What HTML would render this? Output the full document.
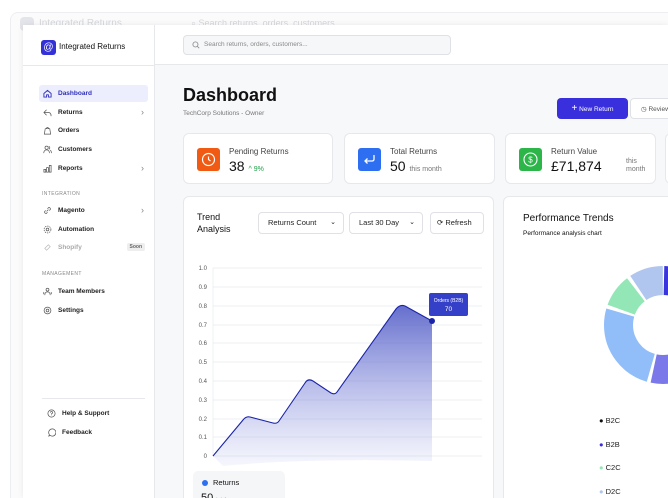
<!DOCTYPE html>
<html><head><meta charset="utf-8">
<style>
*{box-sizing:border-box;margin:0;padding:0}
html,body{width:668px;height:498px;overflow:hidden}
body{background:#fff;font-family:"Liberation Sans",sans-serif;position:relative;color:#111}
.ghost{position:absolute;left:10px;top:12px;width:658px;height:486px;border:1px solid #eceef1;border-right:none;border-bottom:none;border-radius:8px 0 0 0;background:#fbfbfc;overflow:hidden}
.ghost .t{position:absolute;left:28px;top:5px;font-size:10px;color:#d5d7dc}
.ghost .s{position:absolute;left:180px;top:5px;font-size:9px;color:#d5d7dc}
.ghost .lg{position:absolute;left:9px;top:4px;width:14px;height:14px;border-radius:4px;background:#e4e5ea}
.app{position:absolute;left:23px;top:25px;width:645px;height:473px;background:#f7f8fa;box-shadow:0 0 6px rgba(0,0,0,.08);overflow:hidden}
.side{position:absolute;left:0;top:0;width:132px;height:500px;background:#fff;border-right:1px solid #e6e8ec}
.hdr{position:absolute;left:132px;top:0;right:0;height:40px;background:#fff;border-bottom:1px solid #e6e8ec}
.logo{position:absolute;left:18px;top:15px;width:15px;height:15px;border-radius:3px;background:#3431d6;color:#fff;font-size:10px;text-align:center;line-height:15px}
.brand{position:absolute;left:36px;top:17px;font-size:8px;color:#111}
.sline{position:absolute;left:0;top:40px;width:132px;border-top:1px solid #e6e8ec}
.nav{position:absolute;left:16px;width:109px;height:17px;font-size:6.5px;font-weight:bold;color:#222;line-height:17px;padding-left:19px;border-radius:3px}
.nav svg{position:absolute;left:4px;top:4px}
.nav.act{background:#eceefe;color:#2f2fb8}
.chev{position:absolute;right:4px;top:0;color:#888;font-weight:normal;font-size:9px}
.sec{position:absolute;left:19px;font-size:5px;color:#888;letter-spacing:.4px}
.search{position:absolute;left:160px;top:10px;width:268px;height:20px;border:1px solid #dfe1e6;border-radius:4px;background:#f6f7f9;font-size:6.5px;color:#888;line-height:18px;padding-left:20px}
.search svg{position:absolute;left:8px;top:5px}
h1{position:absolute;left:160px;top:60px;font-size:18px;font-weight:bold;color:#111}
.sub{position:absolute;left:160px;top:85px;font-size:6.5px;color:#777}
.btn{position:absolute;top:73px;height:21px;border-radius:4px;font-size:6.5px;line-height:21px;text-align:center}
.card{position:absolute;background:#fff;border:1px solid #e6e8ec;border-radius:6px}
.ic{position:absolute;left:13px;top:14px;width:23px;height:23px;border-radius:3px}
.cl{position:absolute;left:45px;top:13px;font-size:8px;color:#444}
.cv{position:absolute;left:45px;top:24px;font-size:14px;color:#111}
.sel{position:absolute;top:15px;height:22px;border:1px solid #dfe1e6;border-radius:4px;font-size:7.5px;line-height:20px;padding-left:9px;color:#222;background:#fff}
</style></head><body>
<div class="ghost"><div class="lg"></div><div class="t">Integrated Returns</div><div class="s">⌕ Search returns, orders, customers...</div></div>
<div class="app">
 <div class="side">
  <div class="logo">@</div><div class="brand">Integrated Returns</div>
  <div class="sline"></div>
  <div class="nav act" style="top:60px"><svg width="9" height="9" viewBox="0 0 10 10" fill="none" stroke="#2f2fb8" stroke-width="1"><path d="M1 5L5 1.5 9 5V9H6V6.5H4V9H1Z"/></svg>Dashboard</div>
  <div class="nav" style="top:79px"><svg width="9" height="9" viewBox="0 0 10 10" fill="none" stroke="#555" stroke-width="0.8"><path d="M4 2L1 5 4 8M1 5H6Q9 5 9 9"/></svg>Returns<span class="chev">›</span></div>
  <div class="nav" style="top:97px"><svg width="9" height="9" viewBox="0 0 10 10" fill="none" stroke="#555" stroke-width="0.8"><path d="M1.5 9L2.5 3H7.5L8.5 9ZM3.5 3Q5 0 6.5 3"/></svg>Orders</div>
  <div class="nav" style="top:116px"><svg width="9" height="9" viewBox="0 0 10 10" fill="none" stroke="#555" stroke-width="0.8"><circle cx="4" cy="3" r="1.8"/><path d="M0.8 9Q1 5.5 4 5.5T7.2 9M6.5 1.5A1.8 1.8 0 0 1 6.5 4.8M8 5.8Q9.3 6.5 9.3 9"/></svg>Customers</div>
  <div class="nav" style="top:135px"><svg width="9" height="9" viewBox="0 0 10 10" fill="none" stroke="#555" stroke-width="0.8"><path d="M1 9V6H3V9ZM4 9V4H6V9ZM7 9V1.5H9V9Z"/></svg>Reports<span class="chev">›</span></div>
  <div class="sec" style="top:166px">INTEGRATION</div>
  <div class="nav" style="top:177px"><svg width="9" height="9" viewBox="0 0 10 10" fill="none" stroke="#555" stroke-width="0.8"><path d="M4 6L6 4M3 5L1.8 6.2A1.6 1.6 0 0 0 3.8 8.2L5 7M5 3L6.2 1.8A1.6 1.6 0 0 1 8.2 3.8L7 5"/></svg>Magento<span class="chev">›</span></div>
  <div class="nav" style="top:196px"><svg width="9" height="9" viewBox="0 0 10 10" fill="none" stroke="#555" stroke-width="0.8"><circle cx="5" cy="5" r="1.5"/><circle cx="5" cy="5" r="3.8" stroke-dasharray="1.5 1"/></svg>Automation</div>
  <div class="nav" style="top:214px;color:#aaa"><svg width="9" height="9" viewBox="0 0 10 10" fill="none" stroke="#bbb" stroke-width="0.8"><path d="M2 6L6 2 8 4 4 8Z"/></svg>Shopify<span style="position:absolute;right:3px;top:4px;background:#eee;color:#666;font-size:5px;line-height:8px;padding:0 3px;border-radius:2px">Soon</span></div>
  <div class="sec" style="top:246px">MANAGEMENT</div>
  <div class="nav" style="top:258px"><svg width="9" height="9" viewBox="0 0 10 10" fill="none" stroke="#555" stroke-width="0.8"><circle cx="5" cy="3" r="1.6"/><path d="M2 9Q2 5.5 5 5.5T8 9M1 5.5Q0.5 7 1 8M9 5.5Q9.5 7 9 8"/></svg>Team Members</div>
  <div class="nav" style="top:277px"><svg width="9" height="9" viewBox="0 0 10 10" fill="none" stroke="#555" stroke-width="0.8"><circle cx="5" cy="5" r="1.5"/><circle cx="5" cy="5" r="3.8"/></svg>Settings</div>
  <div style="position:absolute;left:19px;top:373px;width:103px;border-top:1px solid #e6e8ec"></div>
  <div class="nav" style="top:380px;left:20px"><svg width="9" height="9" viewBox="0 0 10 10" fill="none" stroke="#555" stroke-width="0.8"><circle cx="5" cy="5" r="4"/><path d="M3.8 4Q3.8 2.8 5 2.8T6.2 4Q6.2 5 5 5.3V6.2M5 7.2V7.5"/></svg>Help &amp; Support</div>
  <div class="nav" style="top:399px;left:20px"><svg width="9" height="9" viewBox="0 0 10 10" fill="none" stroke="#555" stroke-width="0.8"><path d="M2 9L2.6 7.3A4 4 0 1 1 3.6 8.3Z"/></svg>Feedback</div>
 </div>
 <div class="hdr"></div>
 <div class="search"><svg width="8" height="8" viewBox="0 0 10 10" fill="none" stroke="#888" stroke-width="1"><circle cx="4.3" cy="4.3" r="3.2"/><path d="M6.7 6.7L9 9"/></svg>Search returns, orders, customers...</div>
 <h1>Dashboard</h1>
 <div class="sub">TechCorp Solutions - Owner</div>
 <div class="btn" style="left:534px;width:71px;background:#3a2fdc;color:#fff"><b style="font-size:10px;font-weight:normal">+</b> New Return</div>
 <div class="btn" style="left:607px;width:70px;background:#fff;border:1px solid #dfe1e6;color:#555;text-align:left;padding-left:10px">◷ Review</div>

 <div class="card" style="left:160px;top:108px;width:150px;height:51px"><div class="ic" style="background:#f05a12"><svg width="23" height="23" viewBox="0 0 23 23" fill="none" stroke="#fff" stroke-width="1.2"><circle cx="11.5" cy="11.5" r="6"/><path d="M11.5 8.5V11.5L13.5 13"/></svg></div><div class="cl">Pending Returns</div><div class="cv">38 <span style="font-size:7px;color:#22a04a">^ 9%</span></div></div>
 <div class="card" style="left:321px;top:108px;width:151px;height:51px"><div class="ic" style="background:#2d6ff0"><svg width="23" height="23" viewBox="0 0 23 23" fill="none" stroke="#fff" stroke-width="1.3"><path d="M16 7V11Q16 13 14 13H7M9.5 10.5L7 13 9.5 15.5"/></svg></div><div class="cl">Total Returns</div><div class="cv">50 <span style="font-size:7px;color:#777">this month</span></div></div>
 <div class="card" style="left:482px;top:108px;width:151px;height:51px"><div class="ic" style="background:#2cb64a"><svg width="23" height="23" viewBox="0 0 23 23" fill="none" stroke="#fff" stroke-width="1.1"><circle cx="11.5" cy="11.5" r="6.5"/><text x="11.5" y="14.5" font-size="8" fill="#fff" stroke="none" text-anchor="middle" font-family="Liberation Sans">$</text></svg></div><div class="cl">Return Value</div><div class="cv">£71,874</div><div style="position:absolute;left:120px;top:24px;font-size:7px;color:#777;line-height:8px">this<br>month</div></div>
 <div class="card" style="left:642px;top:108px;width:60px;height:51px"></div>

 <div class="card" style="left:160px;top:171px;width:311px;height:340px">
  <div style="position:absolute;left:13px;top:14px;font-size:9px;color:#111;line-height:12px">Trend<br>Analysis</div>
  <div class="sel" style="left:74px;width:86px">Returns Count <span style="position:absolute;right:7px;font-size:7px">⌄</span></div>
  <div class="sel" style="left:165px;width:74px">Last 30 Day <span style="position:absolute;right:7px;font-size:7px">⌄</span></div>
  <div class="sel" style="left:246px;width:54px;padding-left:6px">⟳ Refresh</div>
 </div>
 <svg style="position:absolute;left:160px;top:171px" width="311" height="300">
  <defs><linearGradient id="g" x1="0" y1="0" x2="0" y2="1"><stop offset="0" stop-color="#4a55c4" stop-opacity=".85"/><stop offset="1" stop-color="#8890e0" stop-opacity=".08"/></linearGradient></defs>
  <g stroke="#e9eaee" stroke-width="0.7">
   <line x1="30" y1="72" x2="299" y2="72"/><line x1="30" y1="91" x2="299" y2="91"/><line x1="30" y1="110" x2="299" y2="110"/><line x1="30" y1="129" x2="299" y2="129"/><line x1="30" y1="147" x2="299" y2="147"/><line x1="30" y1="166" x2="299" y2="166"/><line x1="30" y1="185" x2="299" y2="185"/><line x1="30" y1="204" x2="299" y2="204"/><line x1="30" y1="223" x2="299" y2="223"/><line x1="30" y1="241" x2="299" y2="241"/><line x1="30" y1="260" x2="299" y2="260"/><line x1="30" y1="72" x2="30" y2="260"/>
  </g>
  <g font-size="6" fill="#555" font-family="Liberation Sans" text-anchor="end">
   <text x="24" y="74">1.0</text><text x="24" y="93">0.9</text><text x="24" y="112">0.8</text><text x="24" y="131">0.7</text><text x="24" y="149">0.6</text><text x="24" y="168">0.5</text><text x="24" y="187">0.4</text><text x="24" y="206">0.3</text><text x="24" y="225">0.2</text><text x="24" y="243">0.1</text><text x="24" y="262">0</text>
  </g>
  <path d="M30 260L60 224Q63 220 67 221L90 227Q94 228 96 225L122 187Q125 182 130 185L148 197Q152 199 154 196L213 113Q217 108 222 110L249 125V265Q120 262 40 270Z" fill="url(#g)"/>
  <path d="M30 260L60 224Q63 220 67 221L90 227Q94 228 96 225L122 187Q125 182 130 185L148 197Q152 199 154 196L213 113Q217 108 222 110L249 125" fill="none" stroke="#1a24a8" stroke-width="1.1"/>
  <circle cx="249" cy="125" r="3" fill="#1a24a8"/>
  <rect x="246" y="97" width="39" height="23" rx="2" fill="#3440c8"/>
  <text x="265.5" y="106" font-size="5" fill="#fff" text-anchor="middle" font-family="Liberation Sans">Orders (B2B)</text>
  <text x="265.5" y="115" font-size="6.5" fill="#fff" text-anchor="middle" font-family="Liberation Sans">70</text>
 </svg>
 <div style="position:absolute;left:170px;top:446px;width:92px;height:50px;background:#f5f6f8;border-radius:5px"><span style="position:absolute;left:9px;top:9px;width:6px;height:6px;border-radius:50%;background:#2d6ff0"></span><span style="position:absolute;left:20px;top:7px;font-size:7.5px">Returns</span><span style="position:absolute;left:8px;top:21px;font-size:11px">50 <span style="font-size:5px;color:#999">total</span></span></div>

 <div class="card" style="left:480px;top:171px;width:240px;height:340px">
  <div style="position:absolute;left:19px;top:16px;font-size:10px;color:#111">Performance Trends</div>
  <div style="position:absolute;left:19px;top:33px;font-size:6.5px;color:#111">Performance analysis chart</div>
  <div style="position:absolute;left:95px;top:212px;font-size:7.5px;line-height:23.5px;color:#222">
   <div><span style="color:#111">●</span> B2C</div><div><span style="color:#3a2fdc">●</span> B2B</div><div><span style="color:#93e6b6">●</span> C2C</div><div><span style="color:#b0c6ee">●</span> D2C</div>
  </div>
 </div>
 <svg style="position:absolute;left:570px;top:230px" width="140" height="140" viewBox="-70 -70 140 140">
  <g fill="none" stroke-width="29" transform="rotate(-90)">
   <circle r="44.5" stroke="#3b35dc" stroke-dasharray="100 400" stroke-dashoffset="-1"/>
   <circle r="44.5" stroke="#7b78ea" stroke-dasharray="45 400" stroke-dashoffset="-104"/>
   <circle r="44.5" stroke="#91bdf8" stroke-dasharray="70 400" stroke-dashoffset="-152"/>
   <circle r="44.5" stroke="#93e6b6" stroke-dasharray="25 400" stroke-dashoffset="-225"/>
   <circle r="44.5" stroke="#b0c6ee" stroke-dasharray="26 400" stroke-dashoffset="-253"/>
  </g>
 </svg>
</div>
</body></html>
